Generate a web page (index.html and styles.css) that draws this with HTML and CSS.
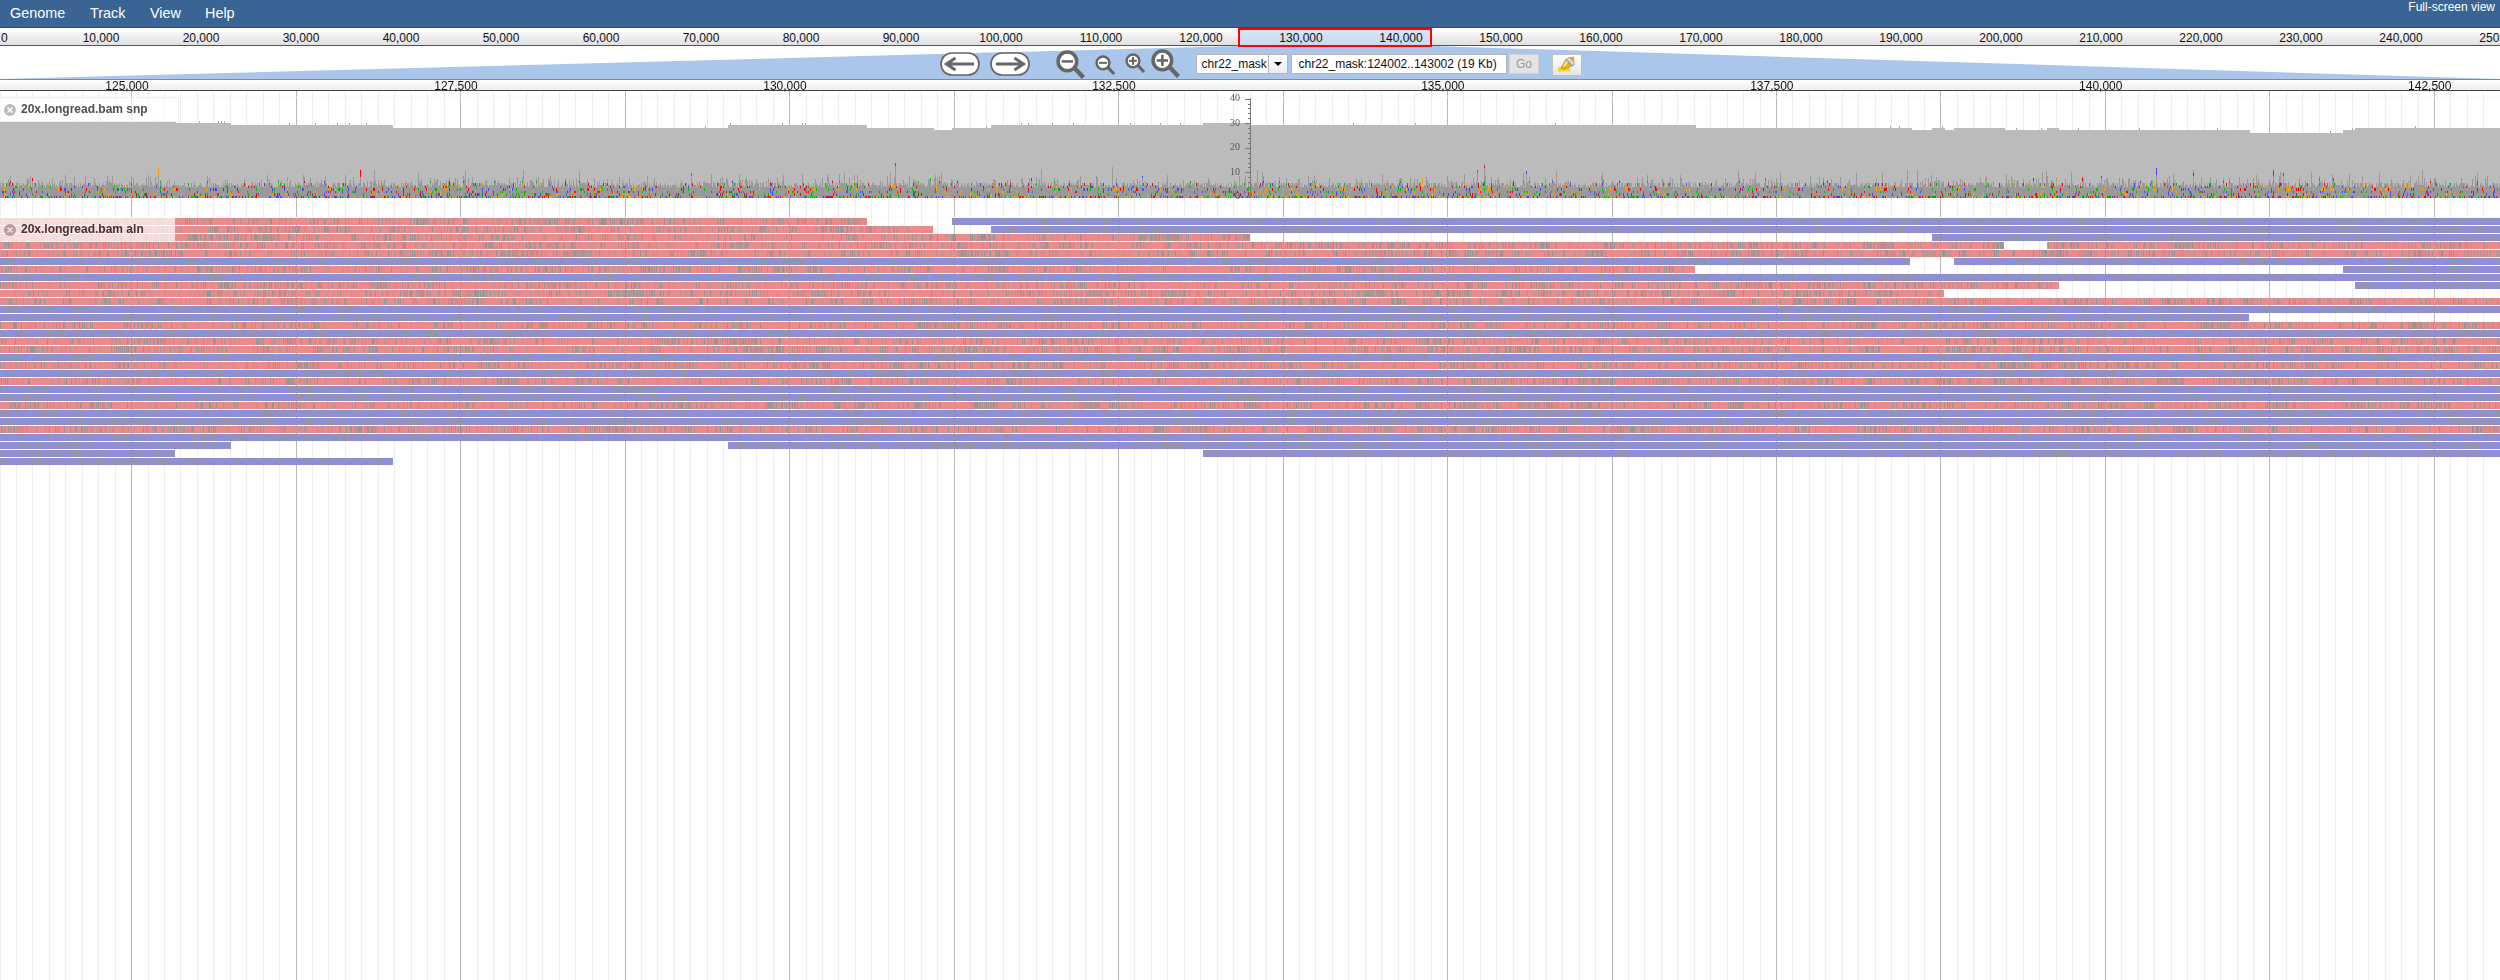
FILE: index.html
```html
<!DOCTYPE html>
<html lang="en">
<head>
<meta charset="utf-8">
<title>Genome browser</title>
<link rel="stylesheet" href="styles.css">
</head>
<body>
<header class="menubar">
  <nav class="menu"><span class="genome">Genome</span><span class="track-menu">Track</span><span class="view">View</span><span>Help</span></nav>
  <a class="fullscreen">Full-screen view</a>
</header>
<div class="overview"><div class="region"></div><div class="overview-labels" id="overview"></div></div>
<div class="navbox">
  <svg class="wedge" viewBox="0 0 2500 33" preserveAspectRatio="none"><path d="M0 33L1238 0H1432L2500 33Z" fill="#aac6ea"/></svg>
  <div class="controls">
    <svg class="pan" viewBox="0 0 40 24"><rect x="1" y="1" width="38" height="22" rx="11" fill="#fff" stroke="#666" stroke-width="1.7"/><path d="M34 12H8M15.500 6L6.500 12L15.500 18" fill="none" stroke="#666" stroke-width="3"/></svg>
    <svg class="pan pan-right" viewBox="0 0 40 24"><rect x="1" y="1" width="38" height="22" rx="11" fill="#fff" stroke="#666" stroke-width="1.700"/><path d="M6 12H32M24.500 6L33.500 12L24.500 18" fill="none" stroke="#666" stroke-width="3"/></svg>
    <svg class="zoom-far-out" viewBox="0 0 29 28"><path d="M17.500 17L26.500 26.500" stroke="#666" stroke-width="4.200"/><circle cx="11" cy="11" r="9" fill="#fff" stroke="#666" stroke-width="3.400"/><path d="M5.500 11H16.500" stroke="#666" stroke-width="2.400"/></svg>
    <svg class="zoom-out" viewBox="0 0 29 28"><path d="M17.500 17L26.500 26.500" stroke="#666" stroke-width="4.200"/><circle cx="11" cy="11" r="9" fill="#fff" stroke="#666" stroke-width="3.400"/><path d="M5.500 11H16.500" stroke="#666" stroke-width="2.800"/></svg>
    <svg class="zoom-in" viewBox="0 0 29 28"><path d="M17.500 17L26.500 26.500" stroke="#666" stroke-width="4.200"/><circle cx="11" cy="11" r="9" fill="#fff" stroke="#666" stroke-width="3.400"/><path d="M5.500 11H16.500M11 5.500V16.500" stroke="#666" stroke-width="2.800"/></svg>
    <svg class="zoom-far-in" viewBox="0 0 29 28"><path d="M17.500 17L26.500 26.500" stroke="#666" stroke-width="4.200"/><circle cx="11" cy="11" r="9" fill="#fff" stroke="#666" stroke-width="3.400"/><path d="M5.500 11H16.500M11 5.500V16.500" stroke="#666" stroke-width="2.400"/></svg>
    <div class="refseq"><span class="refname">chr22_mask</span><span class="drop"><i></i></span></div>
    <div class="location">chr22_mask:124002..143002 (19 Kb)</div>
    <div class="go">Go</div>
    <div class="highlight"><svg width="18" height="17" viewBox="0 0 18 17"><path d="M0 11H12V15.500H0Z" fill="#f5d817"/><path d="M3 12L8 3.500L14 9.500L6 13.500Z" fill="#e5b52b" stroke="#b18b33" stroke-width=".8"/><path d="M6 10L9.500 5" stroke="#fff3a0" stroke-width="1.500"/><path d="M8 3.500L10.500 1.500L16.500 8L14 10.500Z" fill="#bbb" stroke="#888" stroke-width=".8"/><path d="M9.500 3.500L11 3L15 7.500" stroke="#eee" stroke-width="1.500" fill="none"/><path d="M10.500 1.200L16 .500L16.500 7Z" fill="#f29a52"/></svg></div>
  </div>
</div>
<div class="ruler"><div class="ruler-labels" id="ruler"></div></div>
<main class="tracks">
  <canvas id="tracks" width="2500" height="889"></canvas>
  <div class="track-label snp"><svg class="close" viewBox="0 0 12 12"><circle cx="6" cy="6" r="6" fill="#bbb"/><path d="M3.500 3.500L8.500 8.500M8.500 3.500L3.500 8.500" stroke="#fff" stroke-width="1.500"/></svg>20x.longread.bam snp</div>
  <div class="yscale"><span>40</span><span>30</span><span>20</span><span>10</span><span>0</span></div>
  <div class="track-label aln"><svg class="close" viewBox="0 0 12 12"><circle cx="6" cy="6" r="6" fill="#b5a0a0"/><path d="M3.500 3.500L8.500 8.500M8.500 3.500L3.500 8.500" stroke="#f6dcdc" stroke-width="1.500"/></svg>20x.longread.bam aln</div>
</main>
<script src="tracks.js"></script>
</body>
</html>
```
FILE: styles.css
```css
* { box-sizing: border-box; }
body { margin: 0; width: 2500px; height: 980px; overflow: hidden; background: #fff; color: #111; font: 12px "Liberation Sans", Arial, sans-serif; }
.menubar { display: flex; justify-content: space-between; height: 28px; background: #396494; border-bottom: 1px solid #444; color: #fff; }
.menu { display: flex; padding-left: 10px; font-size: 14.4px; line-height: 26px; }
.genome { width: 80px; }
.track-menu { width: 60px; }
.view { width: 55px; }
.fullscreen { padding-right: 5px; line-height: 14px; }
.overview { position: relative; z-index: 2; height: 18px; overflow: clip; overflow-clip-margin: 2px; border-bottom: 1px solid #555; background: linear-gradient(#fff, #e0e0e0); }
.overview-labels { position: relative; display: flex; width: 2600px; padding-left: 1px; line-height: 20px; }
.overview-labels span { flex: none; width: 100px; text-align: center; }
.overview-labels span:first-child { width: 50px; text-align: left; }
.region { position: absolute; left: 1238px; top: 0; width: 194px; height: 19px; border: 2px solid #f00; background: rgba(190, 214, 245, .6); }
.navbox { position: relative; height: 33px; }
.wedge { position: absolute; left: 0; top: 0; width: 2500px; height: 33px; }
.controls { position: relative; display: flex; align-items: flex-start; padding-left: 940px; height: 33px; }
.controls > * { flex: none; }
.pan { width: 40px; height: 24px; margin-top: 6px; }
.pan-right { margin-left: 10px; }
.zoom-far-out { width: 30px; height: 29px; margin: 4px 0 0 26px; }
.zoom-out { width: 21px; height: 20px; margin: 9px 0 0 9px; }
.zoom-in { width: 21px; height: 20px; margin: 7px 0 0 9px; }
.zoom-far-in { width: 30px; height: 29px; margin: 3px 0 0 5px; }
.refseq { display: flex; width: 92px; height: 20px; margin: 8px 0 0 15px; border: 1px solid #b5b5b5; background: #fff; line-height: 18px; }
.refname { width: 71px; padding-left: 4.500px; overflow: hidden; }
.drop { display: flex; width: 19px; align-items: center; justify-content: center; border-left: 1px solid #b5b5b5; background: linear-gradient(#fff, #ececec); }
.drop i { border: 4px solid transparent; border-top: 4px solid #000; border-bottom: 0; }
.location { width: 216px; height: 20px; margin: 8px 0 0 3px; border: 1px solid #b5b5b5; background: #fff; padding-left: 6.500px; line-height: 18px; white-space: nowrap; }
.go { width: 30px; height: 20px; margin: 8px 0 0 2px; border: 1px solid #d0d0d0; background: #e4e4e4; color: #999; line-height: 18px; text-align: center; }
.highlight { display: flex; width: 30px; height: 22px; margin: 8px 0 0 13px; border: 1px solid #c0c0c0; background: linear-gradient(#fff, #e5e5e5); padding: 1px 5px; }
.ruler { height: 12px; border-top: 1px solid #888; border-bottom: 1px solid #444; background: linear-gradient(#fff, #eee); overflow: clip; overflow-clip-margin: 2px; position: relative; z-index: 1; }
.ruler-labels { display: flex; width: 2700px; margin-left: -37.500px; line-height: 12px; }
.ruler-labels span { flex: none; width: 328.980px; text-align: center; }
.tracks { position: relative; height: 889px; }
.tracks canvas { display: block; }
.track-label { position: absolute; left: 0; display: flex; align-items: center; gap: 5px; height: 25px; padding: 0 0 1px 4px; background: rgba(255, 255, 255, .7); color: #444; font-weight: bold; }
.snp { top: 6px; width: 179px; border: 1px solid #eee; border-width: 1px 1px 1px 0; padding-bottom: 2px; color: #505050; }
.aln { top: 126px; width: 175px; color: #472f31; }
.close { width: 12px; height: 12px; margin-top: 2px; }
.yscale { position: absolute; left: 1220px; top: -5px; width: 20px; display: flex; flex-direction: column; text-align: right; font: 10px/24.600px "Liberation Serif", serif; color: #555; }
```
FILE: tracks.js
```js
const fill = (id, count, text) => {
  const box = document.getElementById(id);
  for (let k = 0; k < count; k++) {
    const s = document.createElement('span');
    s.textContent = text(k).toLocaleString('en-US');
    box.appendChild(s);
  }
};
fill('overview', 26, k => k * 10000);
fill('ruler', 8, k => 125000 + k * 2500);

const ctx = document.getElementById('tracks').getContext('2d');
ctx.translate(0, -91);
let seed = 22124;
const rnd = () => {
  seed = (seed + 0x6D2B79F5) | 0;
  let t = Math.imul(seed ^ (seed >>> 15), 1 | seed);
  t = (t + Math.imul(t ^ (t >>> 7), 61 | t)) ^ t;
  return ((t ^ (t >>> 14)) >>> 0) / 4294967296;
};
const rect = (c, x, y, w, h) => { ctx.fillStyle = c; ctx.fillRect(x, y, w, h); };

// gridlines
for (let k = 0; k < 152; k++) {
  rect(k % 10 === 8 ? '#b8b8b8' : '#ededed', Math.floor(k * 16.449), 91, 1, 889);
}
rect('#f7f7f7', 0, 97, 2500, 1);
rect('#f7f7f7', 0, 217, 2500, 1);

// coverage: [start, top]
const steps = [[0, 121], [176, 123], [231, 125], [393, 128], [728, 125], [867, 128], [934, 130],
  [952, 128], [991, 125], [1203, 123], [1250, 125], [1696, 128], [1912, 130], [1932, 128],
  [1945, 130], [1954, 128], [2005, 130], [2047, 128], [2059, 130], [2250, 133], [2343, 130], [2355, 128], [2500, 128]];
const topAt = x => { let t = 121; for (const s of steps) if (x >= s[0]) t = s[1]; return t; };
for (let i = 0; i < steps.length - 1; i++) {
  rect('#bbb', steps[i][0], steps[i][1], steps[i + 1][0] - steps[i][0], 198 - steps[i][1]);
}
for (const x of [77, 100, 158, 199, 218, 221, 224, 289, 315, 337, 349, 366, 705, 730, 782, 802, 805, 986, 1021, 1028, 1052, 1073, 1130, 1160, 1180, 1353, 1415, 1555, 1890, 1899, 1942, 2016, 2041, 2078, 2139, 2217, 2330, 2352, 2415]) {
  rect('#aaa', x, topAt(x) - 2, 1, 2);
}

// mismatches
const bases = ['#00bf00', '#4747ff', '#ffa500', '#ff0000'];
for (let x = 0; x < 2500; x++) {
  let units = 4.5 + Math.floor(rnd() * 3) * .8;
  const r = rnd();
  if (r < .22) units += 1 + rnd() * 2;
  if (r < .05) units += 1 + rnd() * 2;
  if (r < .006) units += 2;
  const h = Math.round(units * 2.46);
  rect('#999', x, 198 - h, 1, h);
  for (let u = 0; u < Math.floor(units); u++) {
    if (rnd() < (u === 0 ? .42 : u < 7 ? .16 : .05)) {
      const top = Math.round(198 - (u + 1) * 2.46);
      rect(bases[Math.floor(rnd() * 4)], x, top, 1, Math.round(198 - u * 2.46) - top);
    }
  }
}
for (const [x, y, c] of [[158, 168, 2], [360, 170, 3], [895, 163, 1], [2156, 168, 1], [1477, 170, 0], [1526, 171, 1]]) {
  rect('#999', x, y, 1, 198 - y);
  rect(bases[c], x, y, 1, x === 158 || x === 360 || x === 2156 ? 7 : 3);
}

// vertical scale
rect('#777', 1250, 98, 1, 100);
for (let u = 0; u <= 20; u++) {
  const y = Math.round(197 - u * 4.92);
  const major = u % 5 === 0;
  rect('#777', major ? 1245 : 1248, y, major ? 5 : 2, 1);
}

// reads per row: [strand, start, end]
const E = 2500;
const rows = [
  [['r', 0, 867], ['b', 952, E]], [['r', 0, 933], ['b', 991, E]], [['r', 0, 1250], ['b', 1932, E]],
  [['r', 0, 2004], ['r', 2047, E]], [['r', 0, E]], [['b', 0, 1910], ['b', 1954, E]],
  [['r', 0, 1695], ['b', 2343, E]], [['b', 0, E]], [['r', 0, 2059], ['b', 2355, E]], [['r', 0, 1944]]
];
for (const c of 'rbbrbrrbrbrbbrbbrb') rows.push([[c, 0, E]]);
rows[12] = [['b', 0, 2249]];
rows.push([['b', 0, 231], ['b', 728, E]], [['b', 0, 175], ['b', 1203, E]], [['b', 0, 393]]);
rows.forEach((reads, i) => {
  const y = 218 + i * 8;
  for (const [c, a, b] of reads) {
    rect(c === 'r' ? '#ec8b8b' : '#8f8fd8', a, y, b - a, 7);
    let density = .25;
    for (let x = a; x < b; x++) {
      if (rnd() < .12) density = .1 + rnd() * rnd() * .85;
      if (rnd() < density) {
        ctx.globalAlpha = rnd() < .35 ? .95 : .35 + rnd() * .3;
        if (c === 'b') ctx.globalAlpha *= .75;
        rect(c === 'r' ? '#969696' : '#98968f', x, y, 1, 7);
        ctx.globalAlpha = 1;
      }
    }
  }
});
```
